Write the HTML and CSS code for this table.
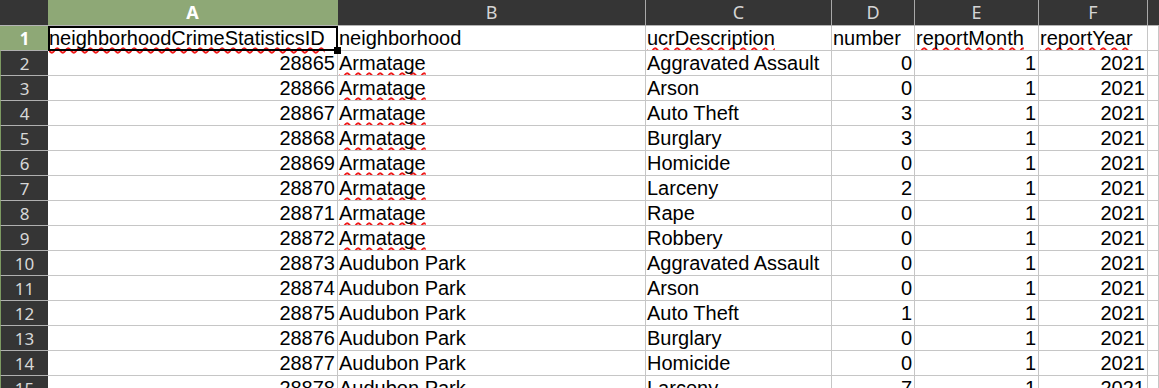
FILE: index.html
```html
<!DOCTYPE html>
<html>
<head>
<meta charset="utf-8">
<link rel="stylesheet" href="styles.css">
</head>
<body>
<div class="sheet">
  <div class="corner"></div>
  <div class="colhead active">A</div>
  <div class="colhead">B</div>
  <div class="colhead">C</div>
  <div class="colhead">D</div>
  <div class="colhead">E</div>
  <div class="colhead">F</div>
  <div class="colhead last"></div>

  <div class="rowhead active">1</div>
  <div class="cell selected"><span class="spell">neighborhoodCrimeStatisticsID</span></div>
  <div class="cell">neighborhood</div>
  <div class="cell"><span class="spell">ucrDescription</span></div>
  <div class="cell">number</div>
  <div class="cell"><span class="spell">reportMonth</span></div>
  <div class="cell"><span class="spell">reportYear</span></div>
  <div class="cell"></div>

  <div class="rowhead">2</div>
  <div class="cell num">28865</div><div class="cell"><span class="spell">Armatage</span></div><div class="cell">Aggravated Assault</div><div class="cell num">0</div><div class="cell num">1</div><div class="cell num">2021</div><div class="cell"></div>

  <div class="rowhead">3</div>
  <div class="cell num">28866</div><div class="cell"><span class="spell">Armatage</span></div><div class="cell">Arson</div><div class="cell num">0</div><div class="cell num">1</div><div class="cell num">2021</div><div class="cell"></div>

  <div class="rowhead">4</div>
  <div class="cell num">28867</div><div class="cell"><span class="spell">Armatage</span></div><div class="cell">Auto Theft</div><div class="cell num">3</div><div class="cell num">1</div><div class="cell num">2021</div><div class="cell"></div>

  <div class="rowhead">5</div>
  <div class="cell num">28868</div><div class="cell"><span class="spell">Armatage</span></div><div class="cell">Burglary</div><div class="cell num">3</div><div class="cell num">1</div><div class="cell num">2021</div><div class="cell"></div>

  <div class="rowhead">6</div>
  <div class="cell num">28869</div><div class="cell"><span class="spell">Armatage</span></div><div class="cell">Homicide</div><div class="cell num">0</div><div class="cell num">1</div><div class="cell num">2021</div><div class="cell"></div>

  <div class="rowhead">7</div>
  <div class="cell num">28870</div><div class="cell"><span class="spell">Armatage</span></div><div class="cell">Larceny</div><div class="cell num">2</div><div class="cell num">1</div><div class="cell num">2021</div><div class="cell"></div>

  <div class="rowhead">8</div>
  <div class="cell num">28871</div><div class="cell"><span class="spell">Armatage</span></div><div class="cell">Rape</div><div class="cell num">0</div><div class="cell num">1</div><div class="cell num">2021</div><div class="cell"></div>

  <div class="rowhead">9</div>
  <div class="cell num">28872</div><div class="cell"><span class="spell">Armatage</span></div><div class="cell">Robbery</div><div class="cell num">0</div><div class="cell num">1</div><div class="cell num">2021</div><div class="cell"></div>

  <div class="rowhead">10</div>
  <div class="cell num">28873</div><div class="cell">Audubon Park</div><div class="cell">Aggravated Assault</div><div class="cell num">0</div><div class="cell num">1</div><div class="cell num">2021</div><div class="cell"></div>

  <div class="rowhead">11</div>
  <div class="cell num">28874</div><div class="cell">Audubon Park</div><div class="cell">Arson</div><div class="cell num">0</div><div class="cell num">1</div><div class="cell num">2021</div><div class="cell"></div>

  <div class="rowhead">12</div>
  <div class="cell num">28875</div><div class="cell">Audubon Park</div><div class="cell">Auto Theft</div><div class="cell num">1</div><div class="cell num">1</div><div class="cell num">2021</div><div class="cell"></div>

  <div class="rowhead">13</div>
  <div class="cell num">28876</div><div class="cell">Audubon Park</div><div class="cell">Burglary</div><div class="cell num">0</div><div class="cell num">1</div><div class="cell num">2021</div><div class="cell"></div>

  <div class="rowhead">14</div>
  <div class="cell num">28877</div><div class="cell">Audubon Park</div><div class="cell">Homicide</div><div class="cell num">0</div><div class="cell num">1</div><div class="cell num">2021</div><div class="cell"></div>

  <div class="rowhead">15</div>
  <div class="cell num">28878</div><div class="cell">Audubon Park</div><div class="cell">Larceny</div><div class="cell num">7</div><div class="cell num">1</div><div class="cell num">2021</div><div class="cell"></div>
</div>
</body>
</html>
```

FILE: styles.css
```css
html, body {
  margin: 0;
  padding: 0;
  background: #ffffff;
  overflow: hidden;
}

.sheet {
  display: grid;
  grid-template-columns: 48px 290px 308px 186px 83px 124px 109px 1fr;
  grid-template-rows: 26px;
  grid-auto-rows: 25px;
  width: 1159px;
  height: 388px;
  overflow: hidden;
  font-family: "Liberation Sans", Arial, sans-serif;
  font-size: 20px;
  color: #000;
}

.corner {
  background: #353535;
  border-bottom: 1px solid #b4b4b4;
  box-sizing: border-box;
}

.colhead {
  box-sizing: border-box;
  background: #353535;
  color: #d4d4d4;
  border-right: 1px solid #a8a8a8;
  border-bottom: 1px solid #b4b4b4;
  font-family: "Noto Sans", "Open Sans", sans-serif;
  font-size: 18px;
  line-height: 25px;
  text-align: center;
}

.colhead.last {
  border-right: none;
}

.colhead.active {
  background: #8ea876;
  color: #ffffff;
  font-weight: bold;
  border-right-color: #8ea876;
}

.rowhead {
  box-sizing: border-box;
  background: #353535;
  color: #d8d8d8;
  border-left: 1px solid #7d9a62;
  border-bottom: 1px solid #b0b0b0;
  font-family: "Noto Sans", "Open Sans", sans-serif;
  font-size: 17px;
  line-height: 25px;
  text-align: center;
}

.rowhead.active {
  background: #8ea876;
  color: #ffffff;
  font-weight: bold;
  border-left-color: #8ea876;
}

.cell {
  box-sizing: border-box;
  border-right: 1px solid #c6c6c6;
  border-bottom: 1px solid #c6c6c6;
  padding: 1px 1px 0 1px;
  line-height: 23px;
  white-space: nowrap;
  overflow: hidden;
}

.cell.num {
  text-align: right;
  padding-right: 2px;
}

.cell.selected {
  position: relative;
  overflow: visible;
  outline: 2px solid #000;
  outline-offset: -2px;
  z-index: 2;
}

.cell.selected::after {
  content: "";
  position: absolute;
  right: -4px;
  bottom: -4px;
  width: 7px;
  height: 7px;
  background: #000;
}

.spell {
  text-decoration-line: underline;
  text-decoration-style: wavy;
  text-decoration-color: #f01818;
  text-decoration-thickness: 1.5px;
  text-underline-offset: 2px;
  text-decoration-skip-ink: none;
}
```
